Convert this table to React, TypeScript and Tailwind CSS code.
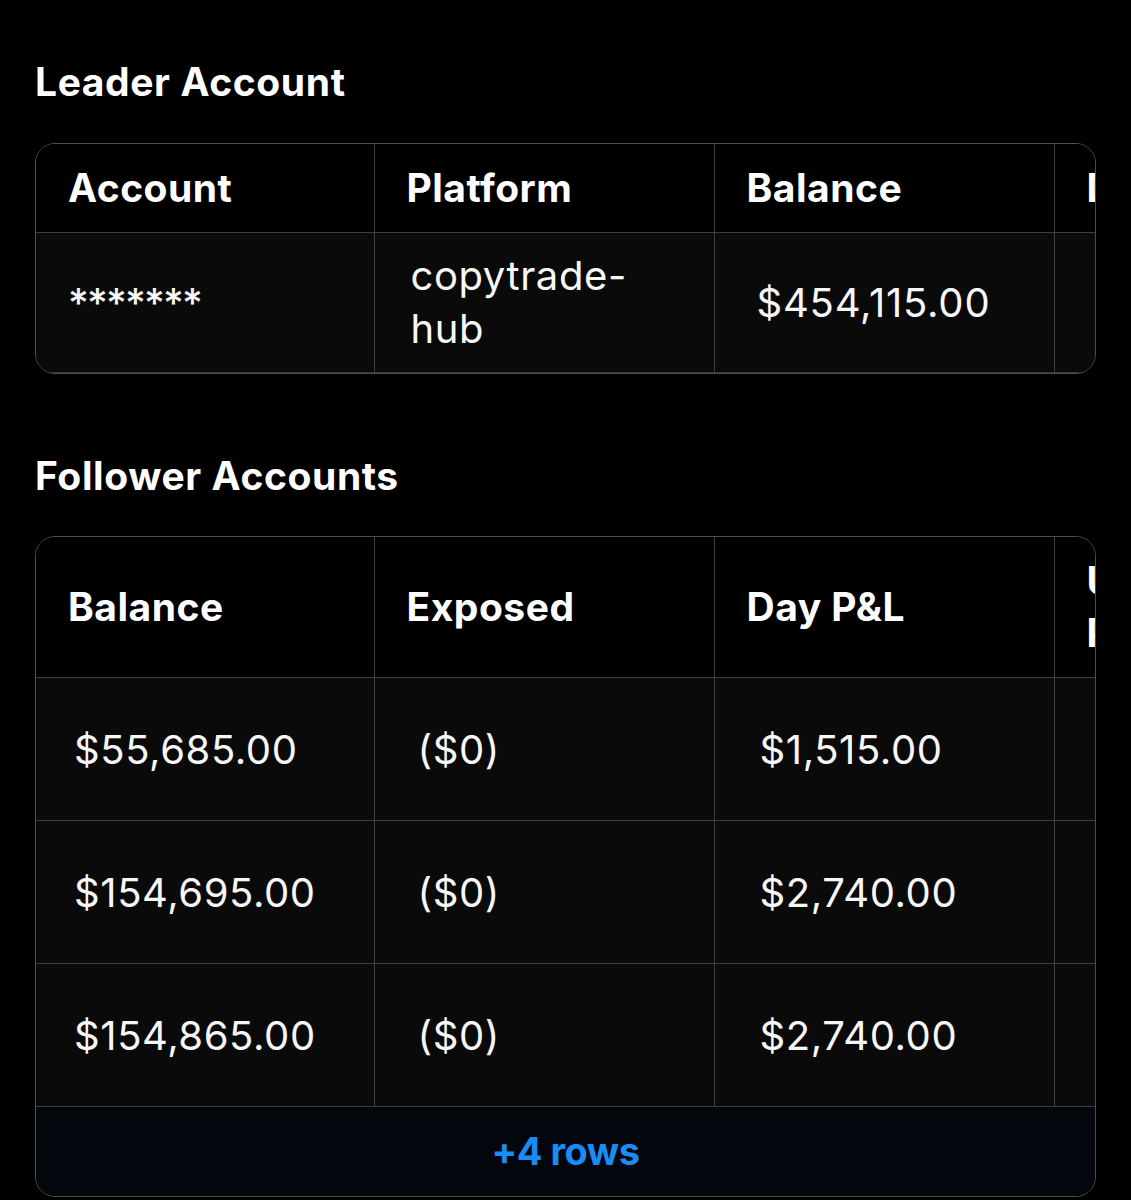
import React from "react";

const font = { fontFamily: "Inter, 'Liberation Sans', sans-serif" };

type Cell = { text: React.ReactNode; pad: string };

const widths = ["w-[338px]", "w-[340px]", "w-[340px]", "w-[340px]"];

function Table({
  headers,
  rows,
  headH,
  rowH,
  footer,
}: {
  headers: React.ReactNode[];
  rows: Cell[][];
  headH: string;
  rowH: string;
  footer?: string;
}) {
  return (
    <div className="overflow-hidden rounded-[20px] border border-[#4d4d4f]">
      <table className="table-fixed border-collapse w-[1358px]">
        <thead>
          <tr className={`${headH} bg-black`}>
            {headers.map((h, i) => (
              <th
                key={i}
                className={`${widths[i]} border-r border-b border-[#3e3e40] pl-8 pr-6 text-left align-middle text-[39px] font-bold leading-[52px] tracking-[0.5px] text-white`}
              >
                {h}
              </th>
            ))}
          </tr>
        </thead>
        <tbody>
          {rows.map((r, ri) => (
            <tr key={ri} className={`${rowH} bg-[#0a0a0a]`}>
              {r.map((c, ci) => (
                <td
                  key={ci}
                  className={`border-r border-b border-[#3e3e40] ${c.pad} pr-9 align-middle text-[40px] font-normal leading-[53px] tracking-[0.6px] text-[#f7f7f7]`}
                >
                  {c.text}
                </td>
              ))}
            </tr>
          ))}
        </tbody>
      </table>
      {footer && (
        <div className="flex h-[89px] items-center justify-center bg-[#03060d] text-[38px] font-bold tracking-[-0.5px] text-[#1a8cf6]">
          {footer}
        </div>
      )}
    </div>
  );
}

export default function App() {
  const follower: Cell[][] = [
    ["$55,685.00", "($0)", "$1,515.00"],
    ["$154,695.00", "($0)", "$2,740.00"],
    ["$154,865.00", "($0)", "$2,740.00"],
  ].map((r) => [
    { text: r[0], pad: "pl-[38px]" },
    { text: r[1], pad: "pl-[43px]" },
    { text: r[2], pad: "pl-[45px]" },
    { text: "", pad: "pl-10" },
  ]);

  return (
    <div className="min-h-[1200px] w-[1131px] bg-black px-[35px] pt-[60px]" style={font}>
      <h2 className="mb-[39px] text-[39px] font-bold leading-[44px] tracking-[0.6px] text-white">
        Leader Account
      </h2>
      <Table
        headers={["Account", "Platform", "Balance", "Day P&L"]}
        headH="h-[88px]"
        rowH="h-[140px]"
        rows={[
          [
            { text: <span className="font-medium tracking-[-1.8px]">*******</span>, pad: "pl-8" },
            { text: "copytrade-hub", pad: "pl-9" },
            { text: <span className="tracking-[0.8px]">$454,115.00</span>, pad: "pl-[42px]" },
            { text: "", pad: "pl-10" },
          ],
        ]}
      />
      <h2 className="mb-[38px] mt-[80px] text-[39px] font-bold leading-[44px] tracking-[0.6px] text-white">
        Follower Accounts
      </h2>
      <Table
        headers={[
          "Balance",
          "Exposed",
          "Day P&L",
          <>
            Unrealized
            <br />
            P&L
          </>,
        ]}
        headH="h-[141px]"
        rowH="h-[143px]"
        rows={follower}
        footer="+4 rows"
      />
    </div>
  );
}
